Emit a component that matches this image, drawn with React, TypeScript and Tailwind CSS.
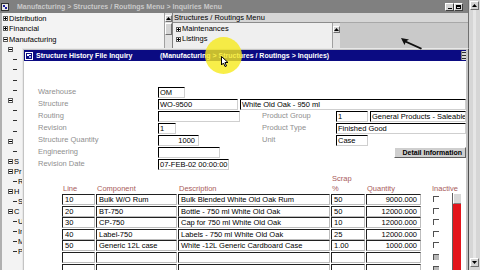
import React from "react";

type TI = { lvl: 0 | 1 | 2; box?: "+" | "-"; text: string };

function Box({ plus }: { plus: boolean }) {
  return (
    <svg width="5" height="5" viewBox="0 0 5 5" className="shrink-0">
      <rect x="0.5" y="0.5" width="4" height="4" fill="white" stroke="#606060" strokeWidth="1" />
      <line x1="1" y1="2.5" x2="4" y2="2.5" stroke="#000" strokeWidth="1" />
      {plus && <line x1="2.5" y1="1" x2="2.5" y2="4" stroke="#000" strokeWidth="1" />}
    </svg>
  );
}

function TreeItem({ item, h }: { item: TI; h: string }) {
  const pad = item.lvl === 0 ? "pl-[1px]" : item.lvl === 1 ? "pl-[6px]" : "pl-[11px]";
  return (
    <div className={`flex items-center shrink-0 whitespace-nowrap ${h} ${pad}`}>
      {item.box ? (
        <Box plus={item.box === "+"} />
      ) : (
        <span className="w-[4px] h-px bg-[#303030] shrink-0" />
      )}
      {item.text && <span className="ml-[1px] text-[7.5px] leading-none text-black">{item.text}</span>}
    </div>
  );
}

function ScrollUp({ cls }: { cls: string }) {
  return (
    <div className={`flex items-center justify-center bg-[#d4d4d4] border-t border-l border-t-white border-l-white border-b border-r border-b-[#707070] border-r-[#707070] ${cls}`}>
      <svg width="5" height="3" viewBox="0 0 5 3">
        <polygon points="2.5,0 5,3 0,3" fill="#000" />
      </svg>
    </div>
  );
}

function ScrollDown({ cls }: { cls: string }) {
  return (
    <div className={`flex items-center justify-center bg-[#d4d4d4] border-t border-l border-t-white border-l-white border-b border-r border-b-[#707070] border-r-[#707070] ${cls}`}>
      <svg width="5" height="3" viewBox="0 0 5 3">
        <polygon points="0,0 5,0 2.5,3" fill="#000" />
      </svg>
    </div>
  );
}

function Field({ cls, children, right }: { cls: string; children?: React.ReactNode; right?: boolean }) {
  return (
    <div
      className={`h-[11px] shrink-0 bg-white border-t border-l border-t-black border-l-black border-b border-r border-b-[#cfcfcf] border-r-[#cfcfcf] text-[7.5px] leading-[10px] text-black whitespace-nowrap overflow-hidden px-[1px] ${right ? "text-right pr-[3px]" : ""} ${cls}`}
    >
      {children}
    </div>
  );
}

function Label({ cls, children }: { cls: string; children: React.ReactNode }) {
  return <div className={`shrink-0 text-[7.5px] leading-none text-[#8f8f8f] whitespace-nowrap ${cls}`}>{children}</div>;
}

const leftTree: TI[] = [
  { lvl: 0, box: "+", text: "Distribution" },
  { lvl: 0, box: "+", text: "Financial" },
  { lvl: 0, box: "-", text: "Manufacturing" },
];
const hiddenTree: TI[] = [
  { lvl: 1, box: "-", text: "" },
  { lvl: 2, text: "" },
  { lvl: 2, text: "" },
  { lvl: 2, text: "" },
  { lvl: 2, text: "" },
  { lvl: 1, box: "-", text: "" },
  { lvl: 2, text: "" },
  { lvl: 2, text: "" },
  { lvl: 2, text: "" },
  { lvl: 1, box: "-", text: "" },
  { lvl: 2, text: "" },
];
const lowerTree: TI[] = [
  { lvl: 1, box: "-", text: "S" },
  { lvl: 1, box: "-", text: "Pr" },
  { lvl: 2, text: "R" },
  { lvl: 1, box: "-", text: "H" },
  { lvl: 2, text: "S" },
  { lvl: 1, box: "-", text: "C" },
  { lvl: 2, text: "U" },
  { lvl: 2, text: "In" },
  { lvl: 2, text: "M" },
  { lvl: 2, text: "Pr" },
];

const rows = [
  ["10", "Bulk W/O Rum", "Bulk Blended White Old Oak Rum", "50", "9000.000"],
  ["20", "BT-750", "Bottle - 750 ml White Old Oak", "50", "12000.000"],
  ["30", "CP-750", "Cap for 750 ml White Old Oak", "10", "12000.000"],
  ["40", "Label-750", "Labels - 750 ml White Old Oak", "25", "12000.000"],
  ["50", "Generic 12L case", "White -12L Generic Cardboard Case", "1.00", "1000.000"],
  ["", "", "", "", ""],
  ["", "", "", "", ""],
];

function Cell({ cls, children, right }: { cls: string; children?: React.ReactNode; right?: boolean }) {
  return (
    <div
      className={`h-[11px] shrink-0 bg-white border-t border-l border-t-[#202020] border-l-[#202020] border-b border-r border-b-[#bdbdbd] border-r-[#bdbdbd] text-[7.5px] leading-[10px] text-black whitespace-nowrap overflow-hidden ${right ? "text-right pr-[3px]" : "pl-[2px]"} ${cls}`}
    >
      {children}
    </div>
  );
}

function InnerWindow() {
  return (
    <div className="absolute left-[22px] top-[48px] w-[447px] h-[222px] flex flex-col bg-[#c4c4c4] border-l border-t border-l-[#e8e8e8] border-t-[#e8e8e8] border-r border-r-[#505050] pl-[1px] pr-[2px] pt-px">
      <div className="h-[11px] shrink-0 bg-[#0b0b82] flex items-center pl-[1px]">
        <svg width="8" height="8" viewBox="0 0 8 8" className="shrink-0">
          <rect x="0" y="0" width="8" height="8" fill="#0b0b82" />
          <rect x="0.5" y="0.5" width="7" height="7" fill="none" stroke="#ffffff" strokeWidth="1" />
          <rect x="2" y="2" width="2" height="2" fill="#ffffff" />
          <rect x="4" y="4" width="2" height="2" fill="#9db0ff" />
          <line x1="4" y1="2.5" x2="6" y2="2.5" stroke="#fff" strokeWidth="1" />
        </svg>
        <span className="ml-[3px] w-[124px] shrink-0 text-[7px] font-bold text-white leading-none whitespace-nowrap">
          Structure History File Inquiry
        </span>
        <span className="text-[7px] font-bold text-white leading-none whitespace-nowrap">
          (Manufacturing &gt; Structures / Routings &gt; Inquiries)
        </span>
        <div className="ml-auto w-[5px] h-[9px] bg-[#d8d8d8] border-l border-[#808080] flex flex-col justify-between py-px">
          <span className="h-px bg-[#303030]" />
          <span className="h-px bg-[#303030]" />
          <span className="h-px bg-[#303030]" />
        </div>
      </div>
      <div className="flex-1 min-h-0 bg-white flex flex-col overflow-hidden">
        {/* form */}
        <div className="pt-[25px] pl-[14px] flex flex-col">
          <div className="h-[12px] flex items-center">
            <Label cls="w-[120px]">Warehouse</Label>
            <Field cls="w-[27px]">OM</Field>
          </div>
          <div className="h-[12px] flex items-center">
            <Label cls="w-[120px]">Structure</Label>
            <Field cls="w-[80px]">WO-9500</Field>
            <Field cls="ml-[2px] flex-1">White Old Oak - 950 ml</Field>
          </div>
          <div className="h-[12px] flex items-center">
            <div className="w-[224px] shrink-0 flex items-center">
              <Label cls="w-[120px]">Routing</Label>
              <Field cls="w-[82px]" />
            </div>
            <Label cls="w-[74px]">Product Group</Label>
            <Field cls="w-[32px]">1</Field>
            <Field cls="ml-[2px] flex-1">General Products - Saleable</Field>
          </div>
          <div className="h-[12px] flex items-center">
            <div className="w-[224px] shrink-0 flex items-center">
              <Label cls="w-[120px]">Revision</Label>
              <Field cls="w-[18px]">1</Field>
            </div>
            <Label cls="w-[74px]">Product Type</Label>
            <Field cls="flex-1">Finished Good</Field>
          </div>
          <div className="h-[12px] flex items-center">
            <div className="w-[224px] shrink-0 flex items-center">
              <Label cls="w-[120px]">Structure Quantity</Label>
              <Field cls="w-[41px]" right>
                1000
              </Field>
            </div>
            <Label cls="w-[74px]">Unit</Label>
            <Field cls="w-[32px]">Case</Field>
          </div>
          <div className="h-[12px] flex items-center">
            <div className="w-[224px] shrink-0 flex items-center">
              <Label cls="w-[120px]">Engineering</Label>
              <Field cls="w-[62px]" />
            </div>
            <div className="ml-auto w-[72px] h-[11px] mt-[1px] bg-[#cfcfcf] border-t border-l border-t-white border-l-white border-b border-r border-b-[#606060] border-r-[#606060] flex items-center justify-end pr-[3px] text-[7px] font-bold leading-none text-black whitespace-nowrap">
              Detail Information
            </div>
          </div>
          <div className="h-[12px] flex items-center">
            <Label cls="w-[120px]">Revision Date</Label>
            <Field cls="w-[71px]">07-FEB-02 00:00:00</Field>
          </div>
        </div>
        {/* table */}
        <div className="pl-[38px] flex">
          <div className="w-[359px] shrink-0 flex flex-col">
            <div className="pt-[4px] flex gap-[1px] text-[7.5px] leading-[10px] text-[#a85a5a] whitespace-nowrap">
              <div className="w-[33px] pl-[1px] flex flex-col"><span className="h-[10px]" /><span>Line</span></div>
              <div className="w-[81px] pl-[1px] flex flex-col"><span className="h-[10px]" /><span>Component</span></div>
              <div className="w-[152px] pl-[1px] flex flex-col"><span className="h-[10px]" /><span>Description</span></div>
              <div className="w-[34px] pl-[1px] flex flex-col"><span className="h-[10px]">Scrap</span><span>%</span></div>
              <div className="w-[55px] pl-[1px] flex flex-col"><span className="h-[10px]" /><span>Quantity</span></div>
            </div>
            {rows.map((r, i) => (
              <div key={i} className="h-[11.6px] flex gap-[1px]">
                <Cell cls="w-[33px]">{r[0]}</Cell>
                <Cell cls="w-[81px]">{r[1]}</Cell>
                <Cell cls="w-[152px]">{r[2]}</Cell>
                <Cell cls="w-[34px]">{r[3]}</Cell>
                <Cell cls="w-[55px]" right>
                  {r[4]}
                </Cell>
              </div>
            ))}
          </div>
          <div className="ml-[12px] w-[6px] shrink-0 flex flex-col">
            <div className="pt-[14px] h-[24px] ml-[-1px] text-[7.5px] leading-[10px] text-[#a85a5a] whitespace-nowrap">Inactive</div>
            {rows.map((r, i) => (
              <div key={i} className="h-[11.6px] pt-[2px]">
                <div
                  className={`w-[6px] h-[6px] border-t border-l border-t-[#505050] border-l-[#505050] ${i >= 5 ? "bg-[#b8b8b8]" : "bg-white"}`}
                />
              </div>
            ))}
          </div>
          <div className="ml-[13px] w-[9px] shrink-0 mt-[23px] h-[120px] flex flex-col bg-[#e3141b] border-l border-[#606060]">
            <div className="h-[11px] bg-[#d8d8d8] border-t border-l border-t-white border-l-white border-b border-b-[#808080]" />
          </div>
        </div>
      </div>
    </div>
  );
}

export default function App() {
  return (
    <div className="relative w-[480px] h-[270px] overflow-hidden bg-[#c9c9c9] font-['Liberation_Sans',Arial,sans-serif] flex">
      <div className="w-[468px] h-full flex flex-col">
        {/* app title bar */}
        <div className="h-[13px] shrink-0 bg-[#808080] flex items-center pl-[1px] pr-[5px]">
          <svg width="8" height="8" viewBox="0 0 8 8" className="shrink-0">
            <rect x="0.5" y="0.5" width="7" height="7" fill="#e8e8e8" stroke="#303030" strokeWidth="1" />
            <rect x="2" y="2" width="2" height="2" fill="#1c1c9c" />
            <rect x="4" y="4" width="2" height="2" fill="#1c1c9c" />
          </svg>
          <span className="ml-[8px] text-[7px] font-bold text-[#c9c9c9] leading-none whitespace-nowrap">
            Manufacturing &gt; Structures / Routings Menu &gt; Inquiries Menu
          </span>
          <div className="ml-auto flex">
            <div className="w-[9px] h-[8px] bg-[#d4d4d4] border-t border-l border-t-white border-l-white border-b border-r border-b-[#404040] border-r-[#404040] flex items-end justify-center pb-px">
              <span className="w-[4px] h-px bg-black" />
            </div>
            <div className="w-[9px] h-[8px] bg-[#d4d4d4] border-t border-l border-t-white border-l-white border-b border-r border-b-[#404040] border-r-[#404040] flex items-center justify-center">
              <span className="w-[5px] h-[4px] border border-black border-t-2" />
            </div>
          </div>
        </div>
        <div className="flex flex-1 min-h-0">
          {/* left tree panel */}
          <div className="w-[172px] h-full shrink-0 flex bg-[#f3f3f3] border-l-2 border-[#b0b0b0]">
            <div className="flex-1 flex flex-col overflow-hidden">
              {leftTree.map((t, i) => (
                <TreeItem key={i} item={t} h="h-[10.5px]" />
              ))}
              <div className="w-[20px] flex flex-col">
                {hiddenTree.map((t, i) => (
                  <TreeItem key={i} item={t} h="h-[10.2px]" />
                ))}
                {lowerTree.map((t, i) => (
                  <TreeItem key={i} item={t} h="h-[10px]" />
                ))}
              </div>
            </div>
            <div className="w-[8px] h-[35px] shrink-0 flex flex-col bg-[#e2e2e2] border-l border-[#a0a0a0] pt-[2px]">
              <ScrollUp cls="w-[7px] h-[7px]" />
              <div className="mt-[1px] w-[7px] h-[12px] bg-[#d4d4d4] border-t border-l border-t-white border-l-white border-b border-r border-b-[#707070] border-r-[#707070]" />
            </div>
          </div>
          {/* middle panel */}
          <div className="w-[168px] h-[35px] shrink-0 flex flex-col border-l border-[#808080]">
            <div className="h-[10px] shrink-0 bg-[#d6d6d6] border-b border-[#8c8c8c] flex items-center pl-[1px] text-[7.5px] leading-none text-black whitespace-nowrap">
              Structures / Routings Menu
            </div>
            <div className="flex flex-1 bg-[#efefef]">
              <div className="flex-1 flex flex-col pt-[1px] pl-[2px]">
                <TreeItem item={{ lvl: 0, box: "+", text: "Maintenances" }} h="h-[10px]" />
                <TreeItem item={{ lvl: 0, box: "+", text: "Listings" }} h="h-[10px]" />
              </div>
              <div className="w-[8px] shrink-0 flex flex-col bg-[#e2e2e2] border-l border-[#a0a0a0] pt-[3px]">
                <ScrollUp cls="w-[7px] h-[7px]" />
              </div>
            </div>
          </div>
          <div className="flex-1 h-[35px] flex flex-col">
            <div className="h-[10px] shrink-0 bg-[#d6d6d6] border-b border-[#a8a8a8]" />
          </div>
        </div>
      </div>
      {/* outer scrollbar */}
      <div className="w-[12px] h-full shrink-0 flex flex-col bg-[#d6d6d6] border-l border-[#707070] pt-[1px] pb-[3px] items-center">
        <ScrollUp cls="w-[9px] h-[9px]" />
        <div className="flex-1 w-[3px] bg-[#e6e6e6]" />
        <ScrollDown cls="w-[9px] h-[9px]" />
      </div>
      <InnerWindow />
      {/* highlight circle */}
      <div className="absolute left-[205px] top-[37px] w-[37px] h-[37px] rounded-full bg-[#f6ea1c] opacity-80" />
      <svg className="absolute left-[221px] top-[56px]" width="8" height="12" viewBox="0 0 8 12">
        <polygon points="0.5,0.5 0.5,9 2.5,7 4,10.5 5.5,10 4,6.5 7,6.5" fill="#ffffff" stroke="#000" strokeWidth="1" />
      </svg>
      {/* mouse pointer */}
      <svg className="absolute left-[400px] top-[37px]" width="24" height="14" viewBox="0 0 24 14">
        <polygon points="1,1 9,2.5 6.5,4 22,11 21,12.5 5.5,5.5 4.5,8" fill="#111" />
      </svg>
    </div>
  );
}
